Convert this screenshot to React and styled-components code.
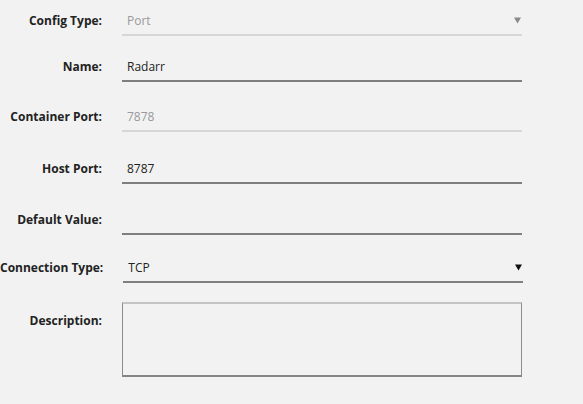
import React from 'react';
import styled, { createGlobalStyle } from 'styled-components';

const GlobalStyle = createGlobalStyle`
  html, body {
    margin: 0;
    padding: 0;
    background: #f2f2f2;
  }
  body {
    font-family: 'Open Sans', 'Noto Sans', sans-serif;
    font-size: 12px;
    color: #222;
  }
`;

const fields = [
  { label: 'Config Type:', value: 'Port', kind: 'select', disabled: true, top: 8 },
  { label: 'Name:', value: 'Radarr', kind: 'input', top: 18 },
  { label: 'Container Port:', value: '7878', kind: 'input', disabled: true, top: 22 },
  { label: 'Host Port:', value: '8787', kind: 'input', top: 24 },
  { label: 'Default Value:', value: '', kind: 'input', top: 23 },
  { label: 'Connection Type:', value: 'TCP', kind: 'select', top: 20 },
];

const Arrow = ({ disabled }) => (
  <ArrowIcon width="7" height="7" viewBox="0 0 7 7">
    <polygon points="0,0.5 7,0.5 3.5,6.5" fill={disabled ? '#8a8a8a' : '#111'} />
  </ArrowIcon>
);

const App = () => {
  return (
    <>
      <GlobalStyle />
      <Form>
        {fields.map((f) => (
          <Row key={f.label} $top={f.top}>
            <Label>{f.label}</Label>
            <Field $disabled={f.disabled}>
              <Value $disabled={f.disabled}>{f.value}</Value>
              {f.kind === 'select' && <Arrow disabled={f.disabled} />}
            </Field>
          </Row>
        ))}
        <Row $top={19}>
          <Label $offset={11}>Description:</Label>
          <TextArea />
        </Row>
      </Form>
    </>
  );
};

const Form = styled.form`
  display: flex;
  flex-direction: column;
  width: 522px;
`;

const Row = styled.div`
  display: flex;
  align-items: flex-start;
  gap: 20px;
  margin-top: ${({ $top }) => $top}px;
`;

const Label = styled.label`
  flex: 0 0 102px;
  display: flex;
  justify-content: flex-end;
  white-space: nowrap;
  font-weight: 700;
  line-height: 16px;
  padding-top: ${({ $offset }) => ($offset != null ? $offset : 5)}px;
  color: #222;
`;

const Field = styled.div`
  flex: 0 0 400px;
  box-sizing: border-box;
  height: 28px;
  display: flex;
  align-items: flex-start;
  justify-content: space-between;
  padding: 5px 1px 0 5px;
  border-bottom: 2px solid ${({ $disabled }) => ($disabled ? '#d6d6d6' : '#7f7f7f')};
`;

const Value = styled.span`
  line-height: 16px;
  color: ${({ $disabled }) => ($disabled ? '#999' : '#222')};
`;

const ArrowIcon = styled.svg`
  margin-top: 4px;
`;

const TextArea = styled.div`
  flex: 0 0 400px;
  box-sizing: border-box;
  height: 75px;
  border-style: solid;
  border-width: 2px 1px 2px 1px;
  border-color: #c4c4c4 #8c8c8c #858585 #8c8c8c;
`;

export default App;
